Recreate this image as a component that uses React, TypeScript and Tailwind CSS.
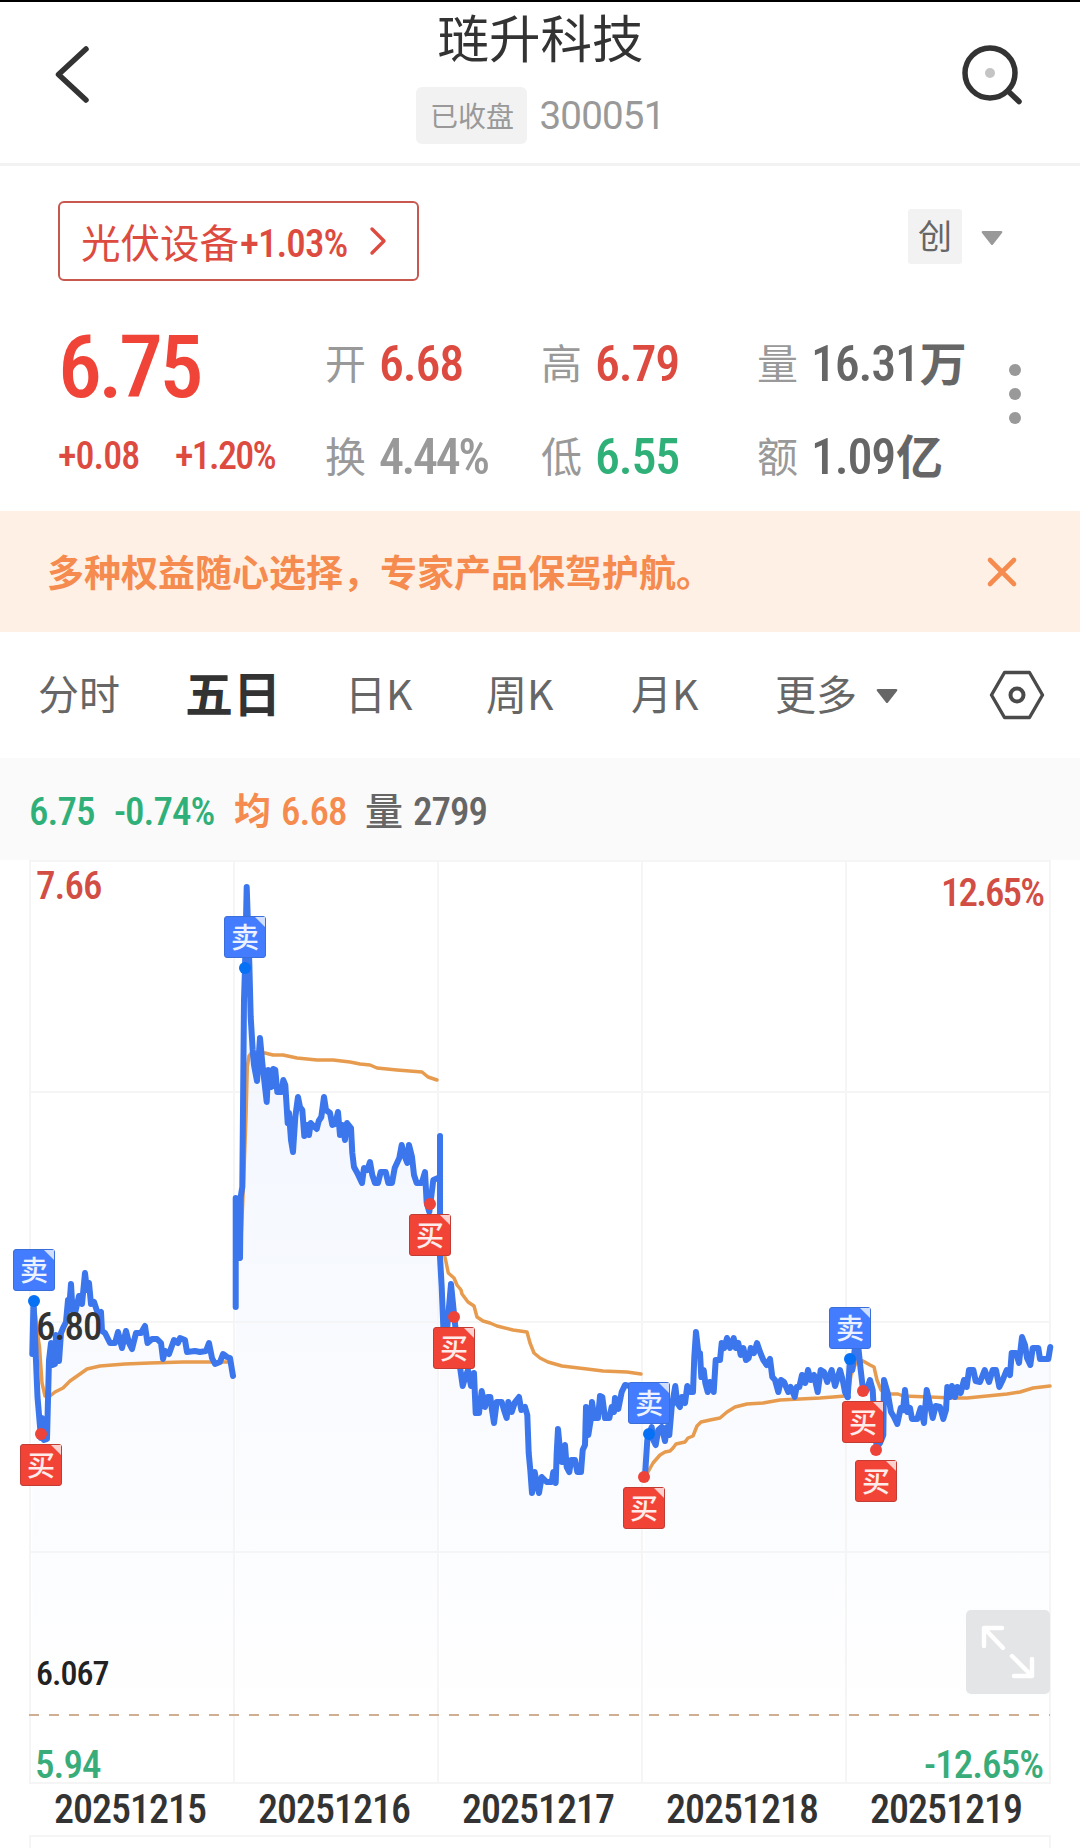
interface Quote {
  label: string;
  value: string;
  unit?: string;
  color: string;
}

interface Marker {
  x: number;
  y: number;
  type: "buy" | "sell";
}

const QUOTES: Quote[] = [
  { label: "开", value: "6.68", color: "text-[#dd4b40]" },
  { label: "高", value: "6.79", color: "text-[#dd4b40]" },
  { label: "量", value: "16.31", unit: "万", color: "text-[#666]" },
  { label: "换", value: "4.44%", color: "text-[#999]" },
  { label: "低", value: "6.55", color: "text-[#30b079]" },
  { label: "额", value: "1.09", unit: "亿", color: "text-[#666]" },
];

const DATES = ["20251215", "20251216", "20251217", "20251218", "20251219"];

// One entry per trading day
const PRICE_LINES = [
  "32.3,1354 33.5,1301 37.5,1397 41,1438 42,1418 44,1440 47,1439 49,1360 51,1343 52.5,1365 55,1364 56,1335 59,1361 61,1333 63.5,1327 66,1322 68,1300 69,1310 71,1284 72.5,1310 75,1313 79,1296 82,1304 85,1273 87,1290 89,1283 91,1304 94,1302 98,1314 101,1312 102,1331 105,1333 110,1343 115,1343 118,1332 122,1348 126,1331 129,1343 132,1349 136,1333 141,1333 145,1326 147.5,1343 152,1339 157,1339 161,1343 163,1359 165,1351 169,1354 174,1340 178,1343 180,1338 185,1340 187,1352 195,1351 200,1352 206,1351 209,1343 212,1358 215,1364 220,1362 223,1354 227,1357 230,1358 233,1376",
  "235.7,1307 235.7,1198 240,1258 240.7,1197 242.3,1187 244,1000 245,968 246.7,887 249.3,963 250.7,1017 252.7,1050 254,1065 257,1081 260,1038 262.3,1063 266.7,1102 268.3,1070 271.3,1087 273.3,1069 275.3,1070 277.3,1092 281.7,1092 283.3,1080 285.3,1085 287.7,1123 289,1113 291,1140 293,1152 295.3,1117 298,1097 300,1107 302.3,1110 304.3,1136 306.7,1125 309,1135 310.7,1123 316.7,1129 318.7,1121 321.3,1117 324,1097 326,1110 330,1113 332.3,1125 335.3,1124 338,1112 340,1135 342.3,1125 345,1140 347,1123 351,1128 352.3,1153 354,1167 357.3,1173 362,1183 364,1168 367.3,1170 370,1162 372.3,1175 375,1183 378,1183 380.7,1172 385.7,1172 388.3,1183 392,1183 394.7,1168 399.3,1158 401.7,1145 405,1157 407.3,1163 409,1145 412,1157 414,1175 416.7,1183 421.7,1183 425,1172 426.7,1203 429.3,1212 433.3,1180 438,1178",
  "440,1136 440,1257 441.7,1287 443.3,1327 447,1330 451,1284 453.3,1307 456,1333 460,1367 462.7,1386 465.3,1377 468,1370 471,1386 474,1373 475.7,1413 479,1413 481.7,1391 485,1407 487.7,1397 490.3,1397 492,1410 494,1423 496.7,1402 501.7,1402 504,1410 506.7,1418 508.3,1402 511.7,1412 515,1402 519,1397 521.3,1410 525,1407 527.3,1415 528.7,1453 530.3,1470 532,1493 534.7,1472 536.7,1483 539,1493 541.7,1477 546.7,1482 551.7,1482 553.3,1472 555.7,1483 556.7,1453 558,1429 560,1450 562,1462 565,1445 566.7,1467 569.3,1472 571,1460 575,1460 577.3,1472 581,1472 582.7,1450 585,1445 586,1407 588.3,1435 590.7,1420 592,1402 594.3,1418 598,1418 600,1396 602.3,1397 605,1418 609.3,1418 611.7,1407 614,1412 615,1398 618.3,1409 621.7,1392 625,1385 630,1386 636,1392 641,1386",
  "645,1476 647.3,1440 649,1434 651.7,1427 653.3,1440 655.7,1445 658.3,1430 661.7,1427 665,1441 667,1427 669.3,1435 671.7,1407 675.3,1386 677.3,1403 680,1407 682,1397 685,1403 687.3,1386 690,1392 693,1392 694.3,1357 696,1332 698.3,1352 700,1353 701.3,1377 703.7,1370 705.3,1383 707.7,1392 710,1382 713.7,1392 715.7,1360 720,1360 721.7,1343 724.3,1348 727,1338 730,1348 733.7,1338 735.7,1348 738.3,1343 740.7,1355 743.3,1348 746,1360 748.7,1358 750.7,1348 754,1353 757,1343 760,1352 763.3,1360 766.7,1365 770,1359 772.3,1377 775,1380 778.3,1392 781,1380 784,1382 788.3,1392 790.7,1387 794.7,1397 796.7,1387 799.3,1387 802,1375 805.3,1383 808,1370 810.7,1380 814,1375 817.7,1392 820.7,1370 824,1372 827.3,1382 831.7,1370 835,1386 840,1370 842.7,1380 845,1392 847.7,1397",
  "847.7,1397 849.3,1370 850,1359 852.3,1370 855,1347 858.3,1347 860.7,1370 862.7,1387 866.7,1390 870,1380 872.7,1390 874.3,1420 876.7,1447 880,1443 883.3,1435 884,1380 887.7,1393 891,1412 894,1417 897.3,1424 900.7,1408 903,1410 905,1390 907.3,1412 910,1408 912,1419 917.3,1419 920.7,1408 924,1423 926.7,1390 930,1405 932.7,1418 935.7,1406 940,1407 943.3,1419 946,1410 947.3,1387 950,1397 952,1386 955,1397 957.3,1387 960.7,1393 964,1380 966.7,1387 969,1370 973.3,1370 975.7,1381 980,1382 984.7,1370 989,1382 992.7,1370 996,1370 999.3,1387 1002.7,1380 1006.7,1370 1010,1375 1011.7,1353 1016,1353 1019,1363 1022,1337 1025,1345 1027,1358 1030.3,1365 1032.7,1348 1038.3,1348 1040,1359 1048.3,1359 1050.3,1347",
];

const AVERAGE_LINES = [
  "34,1301 37,1330 39.5,1347 42,1383 45,1396 50,1396 55,1392 63,1388 70,1381 80,1374 87,1369 100,1366 125,1364 150,1363 183,1362 212,1362 230,1362",
  "240,1258 242.7,1203 244,1170 246,1117 247.3,1067 249,1056 252,1052 265,1053 273,1055 283,1055 297,1058 317,1060 333,1060 350,1062 360,1064 370,1065 377,1068 397,1070 422,1072 428,1077 437,1080",
  "441,1210 445,1257 448.3,1273 454,1278 457,1285 461,1290 462,1294 468,1302 474,1306 477,1317 483,1321 490,1323 497,1326 513,1330 527,1332 530,1343 534,1353 540,1358 548,1362 562,1366 587,1369 603,1371 627,1372 641,1374",
  "644,1477 648,1472 653,1463 660,1455 665,1452 670,1451 673,1448 676,1444 685,1442 688,1438 693,1436 697,1426 701,1422 710,1420 720,1418 727,1412 735,1407 747,1404 763,1403 780,1400 800,1399 820,1398 833,1397 845,1396",
  "848,1395 851,1375 857,1360 863,1361 870,1365 874,1367 877,1380 881,1390 887,1394 898,1394 903,1396 930,1397 953,1398 967,1398 987,1396 1007,1394 1020,1392 1033,1388 1050,1386",
];

const MARKERS: Marker[] = [
  { x: 34, y: 1301, type: "sell" },
  { x: 41, y: 1434, type: "buy" },
  { x: 245, y: 968, type: "sell" },
  { x: 430, y: 1204, type: "buy" },
  { x: 454, y: 1317, type: "buy" },
  { x: 644, y: 1477, type: "buy" },
  { x: 649, y: 1434, type: "sell" },
  { x: 850, y: 1359, type: "sell" },
  { x: 863, y: 1391, type: "buy" },
  { x: 876, y: 1450, type: "buy" },
];

// Page y of the chart's top edge, the series above are in page coordinates
const CHART_TOP = 860;

const NUM = "font-['Roboto','Noto_Sans_CJK_SC',sans-serif] [font-stretch:75%] tracking-[-0.025em]";

function Header() {
  return (
    <header className="flex h-[164px] items-start justify-between border-b-[3px] border-[#f2f2f2] pr-[59px] pl-[54px] pt-[42px]">
      <svg className="h-[62px] w-[60px]" viewBox="0 0 60 62" fill="none" stroke="#333" strokeWidth="5.5" strokeLinecap="round" strokeLinejoin="round">
        <path d="M32 5 L4.5 30.5 L32 56" />
      </svg>
      <div className="-mt-[42px] ml-[6px] flex flex-col items-center">
        <h1 className="text-[51.5px] leading-[68px] text-[#333]">琏升科技</h1>
        <div className="mt-[17px] flex items-center gap-[12px]">
          <span className="flex h-[57px] w-[111px] items-center justify-center rounded-md bg-[#f2f2f2] pb-[2px] text-[28px] leading-none text-[#999]">
            已收盘
          </span>
          <span className="pt-[2px] font-['Roboto',sans-serif] text-[38.5px] leading-none tracking-[-0.8px] text-[#999]">300051</span>
        </div>
      </div>
      <svg className="-mr-[6px] h-[62px] w-[66px]" viewBox="0 0 66 62" fill="none" stroke="#333" strokeWidth="5.5" strokeLinecap="round">
        <circle cx="29" cy="29" r="25" />
        <path d="M47 47 L58 57.5" />
        <circle cx="29" cy="29" r="5" fill="#c4c4c4" stroke="none" />
      </svg>
    </header>
  );
}

function QuoteCell({ quote }: { quote: Quote }) {
  return (
    <div className="flex h-[93px] items-center whitespace-nowrap">
      <span className="w-[54px] pb-[5px] text-[41px] leading-none text-[#999]">{quote.label}</span>
      <span className={`${NUM} ${quote.color} text-[50px] leading-none font-medium ${quote.value.endsWith("%") ? "tracking-[-0.048em]" : ""}`}>
        {quote.value}
      </span>
      {quote.unit && <span className={`${quote.color} ml-px pb-[6px] text-[47px] leading-none font-bold`}>{quote.unit}</span>}
    </div>
  );
}

function Summary() {
  return (
    <section className="h-[345px] pt-[35px]">
      <div className="flex items-center justify-between pr-[77px] pl-[58px]">
        <div className="flex h-[80px] w-[361px] items-center rounded-md border-2 border-[#c8574e] pl-[21px] text-[#dd4b40]">
          <span className="pb-px text-[39.5px] leading-none">光伏设备</span>
          <span className={`${NUM} ml-px pt-[6px] text-[39px] leading-none font-medium`}>+1.03%</span>
          <svg className="ml-[22px] h-[30px] w-[20px]" viewBox="0 0 20 30" fill="none" stroke="#dd4b40" strokeWidth="3.4" strokeLinecap="round" strokeLinejoin="round">
            <path d="M3 3 L15 15 L3 27" />
          </svg>
        </div>
        <div className="-mt-[10px] flex items-center gap-[19px]">
          <span className="flex h-[55px] w-[54px] items-center justify-center rounded-[3px] bg-[#f2f2f2] pb-[3px] text-[34px] leading-none text-[#666]">创</span>
          <svg className="mt-[3px] h-[16px] w-[22px]" viewBox="0 0 22 16">
            <path d="M2 1 H20 Q22 1 21 3 L12 14.5 Q11 15.5 10 14.5 L1 3 Q0 1 2 1 Z" fill="#999" />
          </svg>
        </div>
      </div>

      <div className="mt-[36px] flex pl-[58px]">
        <div className="w-[267px] font-medium">
          <div className={`${NUM} flex h-[99px] items-center text-[88px] leading-none tracking-[-0.042em] text-[#f04438]`}>6.75</div>
          <div className={`${NUM} flex h-[80px] items-center text-[38px] leading-none text-[#dd4b40]`}>
            <span className="w-[117px]">+0.08</span>
            <span className="tracking-[-0.045em]">+1.20%</span>
          </div>
        </div>
        <div className="grid grid-cols-[216px_216px_240px]">
          {QUOTES.map((quote) => (
            <QuoteCell key={quote.label} quote={quote} />
          ))}
        </div>
        <div className="mt-[47px] ml-[12px] flex flex-col gap-[12px]">
          <span className="size-[12px] rounded-full bg-[#999]" />
          <span className="size-[12px] rounded-full bg-[#999]" />
          <span className="size-[12px] rounded-full bg-[#999]" />
        </div>
      </div>
    </section>
  );
}

function Banner() {
  return (
    <div className="flex h-[121px] items-center justify-between bg-[#fff0e6] pr-[62px] pl-[47px]">
      <p className="pb-px text-[37px] leading-none font-bold text-[#f58b4e]">多种权益随心选择，专家产品保驾护航。</p>
      <svg className="h-[32px] w-[32px]" viewBox="0 0 32 32" stroke="#f58b4e" strokeWidth="4.6" strokeLinecap="round">
        <path d="M4 4 L28 28 M28 4 L4 28" />
      </svg>
    </div>
  );
}

function PeriodTabs() {
  return (
    <nav className="flex h-[126px] items-center pl-[38px] text-[41px] leading-none whitespace-nowrap text-[#666]">
      <span className="w-[147px] pb-[5px]">分时</span>
      <span className="w-[160px] pb-[8px] text-[48px] font-bold text-[#333]">五日</span>
      <span className="w-[141px] pb-[5px]">日K</span>
      <span className="w-[145px] pb-[5px]">周K</span>
      <span className="w-[144px] pb-[5px]">月K</span>
      <span className="w-[101px] pb-[5px]">更多</span>
      <svg className="mt-[2px] h-[16px] w-[22px]" viewBox="0 0 22 16">
        <path d="M2 1 H20 Q22 1 21 3 L12 14.5 Q11 15.5 10 14.5 L1 3 Q0 1 2 1 Z" fill="#666" />
      </svg>
      <svg className="ml-[90px] h-[52px] w-[58px]" viewBox="0 0 58 52" fill="none" stroke="#4a4a4a" strokeLinejoin="round">
        <path d="M16.5 3.5 H41.5 L54.5 26 L41.5 48.5 H16.5 L3.5 26 Z" strokeWidth="3.4" />
        <circle cx="29" cy="26" r="6.5" strokeWidth="4" />
      </svg>
    </nav>
  );
}

function Legend() {
  return (
    <div className={`${NUM} flex h-[102px] items-center bg-[#fafafa] pt-[6px] pl-[29px] text-[39px] leading-none font-medium whitespace-nowrap`}>
      <span className="w-[85px] text-[#30b079]">6.75</span>
      <span className="w-[120px] text-[#30b079]">-0.74%</span>
      <span className="w-[47px] pb-[6px] font-['Noto_Sans_CJK_SC',sans-serif] text-[37px] font-bold text-[#f58b4e]">均</span>
      <span className="w-[84px] text-[#f58b4e]">6.68</span>
      <span className="w-[48px] pb-[6px] font-['Noto_Sans_CJK_SC',sans-serif] text-[38px] text-[#666]">量</span>
      <span className="text-[#666]">2799</span>
    </div>
  );
}

function MarkerTag({ marker }: { marker: Marker }) {
  const sell = marker.type === "sell";
  return (
    <div
      className={`absolute size-[42px] rounded-[3px] border ${
        sell ? "border-[#3a6ed8] bg-[#437cff]" : "border-[#c23c33] bg-[#f24337]"
      }`}
      style={{ left: marker.x - 21, top: marker.y - CHART_TOP + (sell ? -52 : 10) }}
    >
      <span className="flex h-full items-center justify-center pb-[3px] text-[28px] leading-none font-medium text-white/90">
        {sell ? "卖" : "买"}
      </span>
      <span className="absolute top-0 right-0 size-[10px] bg-white/75 [clip-path:polygon(0_0,100%_0,100%_100%)]" />
    </div>
  );
}

function Chart() {
  return (
    <div className="relative h-[924px]">
      <svg className="absolute inset-0 h-[924px] w-full" viewBox={`0 ${CHART_TOP} 1080 924`} fill="none">
        <defs>
          <linearGradient id="area" gradientUnits="userSpaceOnUse" x1="0" y1="887" x2="0" y2="1740">
            <stop offset="0" stopColor="#3b78ee" stopOpacity="0.075" />
            <stop offset="1" stopColor="#3b78ee" stopOpacity="0" />
          </linearGradient>
        </defs>

        {PRICE_LINES.map((points) => {
          const first = points.split(",")[0];
          const last = points.split(" ").pop()?.split(",")[0];
          return <polygon key={points} points={`${first},1784 ${points} ${last},1784`} fill="url(#area)" />;
        })}

        <g stroke="#f5f5f5" strokeWidth="2">
          {[30, 234, 438, 642, 846, 1050].map((x) => (
            <path key={x} d={`M${x} 861 V1784`} />
          ))}
          {[861, 1092, 1322, 1552, 1783].map((y) => (
            <path key={y} d={`M29 ${y} H1051`} />
          ))}
        </g>

        <path d="M29 1715 H1050" stroke="#cfae92" strokeWidth="2" strokeDasharray="10 10" />

        {AVERAGE_LINES.map((points) => (
          <polyline key={points} points={points} stroke="#e79b4e" strokeWidth="3.5" strokeLinecap="round" strokeLinejoin="round" />
        ))}
        {PRICE_LINES.map((points) => (
          <polyline key={points} points={points} stroke="#3b76ec" strokeWidth="6" strokeLinecap="round" strokeLinejoin="round" />
        ))}
        {MARKERS.map((m) => (
          <circle key={`${m.x}-${m.y}`} cx={m.x} cy={m.y} r="6" fill={m.type === "sell" ? "#0671f5" : "#ee4339"} />
        ))}
      </svg>

      {/* Axis labels */}
      <div className={`${NUM} text-[39px] leading-none font-medium`}>
        <span className="absolute top-[7px] left-[36px] text-[#d24d43]">7.66</span>
        <span className="absolute top-[14px] right-[37px] tracking-[-0.05em] text-[#d24d43]">12.65%</span>
        <span className="absolute top-[448px] left-[36px] text-[#333]">6.80</span>
        <span className="absolute top-[796px] left-[36px] text-[34px] text-[#222]">6.067</span>
        <span className="absolute top-[886px] left-[35px] text-[#38ac79]">5.94</span>
        <span className="absolute top-[886px] right-[37px] text-[#38ac79]">-12.65%</span>
      </div>

      {MARKERS.map((m) => (
        <MarkerTag key={`${m.x}-${m.y}`} marker={m} />
      ))}

      <button className="absolute top-[750px] left-[966px] size-[84px] rounded-[5px] bg-[#e4e5e7]">
        <svg viewBox="0 0 84 84" fill="none" stroke="#fff" strokeWidth="4.4" strokeLinecap="round" strokeLinejoin="round">
          <path d="M36 18 H18 V36 M18 18 L37 38" />
          <path d="M66 49 V66 H48 M66 66 L46 46" />
        </svg>
      </button>
    </div>
  );
}

export default function App() {
  return (
    <div className="h-[1848px] w-[1080px] overflow-hidden bg-white font-['Noto_Sans_CJK_SC',sans-serif]">
      <div className="h-[2px] bg-black" />
      <Header />
      <Summary />
      <Banner />
      <PeriodTabs />
      <Legend />
      <Chart />
      <div className="ml-[28px] grid h-[51px] w-[1020px] grid-cols-5">
        {DATES.map((date) => (
          <span key={date} className={`${NUM} flex items-center justify-center text-[40px] leading-none font-medium text-[#333]`}>
            {date}
          </span>
        ))}
      </div>
      <div className="mx-[29px] h-[13px] border-2 border-b-0 border-[#f5f5f5]" />
    </div>
  );
}
